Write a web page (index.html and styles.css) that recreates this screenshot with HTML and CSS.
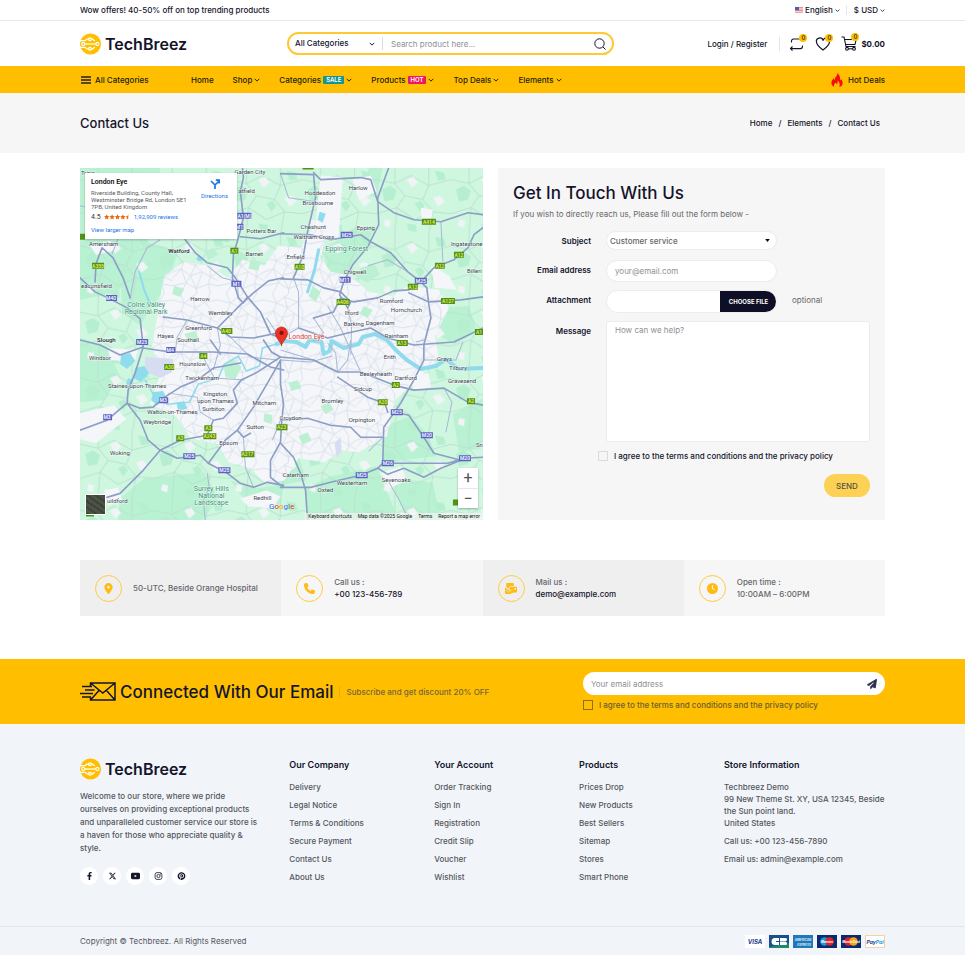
FILE: index.html
```html
<!DOCTYPE html>
<html lang="en">
<head>
<meta charset="utf-8">
<meta name="viewport" content="width=device-width, initial-scale=1">
<title>Contact Us - TechBreez</title>
<link rel="stylesheet" href="styles.css">
</head>
<body>
<svg class="defs" aria-hidden="true">
  <symbol id="chev" viewBox="0 0 8 8"><path d="M1 2.5 4 5.5 7 2.5" fill="none" stroke="currentColor" stroke-width="1.3"/></symbol>
  <symbol id="logo" viewBox="0 0 22 22">
    <circle cx="11" cy="11" r="11" fill="#ffbf00"/>
    <g fill="none" stroke="#fff" stroke-width="1.3">
      <circle cx="3.4" cy="11" r="1.6"/><circle cx="18.2" cy="11" r="1.6"/><path d="M5 11h11.6"/>
      <circle cx="10.4" cy="6" r="1.5"/><path d="M0 7.500h5.500L7 6h2"/>
      <circle cx="10.400" cy="16" r="1.500"/><path d="M0 14.500h5.500L7 16h2"/>
      <path d="M11.900 6h1.600l2 2M11.900 16h1.600l2-2"/>
    </g>
  </symbol>
</svg>

<div class="topbar">
  <div class="wrap topbar-row">
    <span>Wow offers! 40-50% off on top trending products</span>
    <div class="prefs">
      <button type="button" class="pref">
        <svg class="flag" viewBox="0 0 8 6"><path fill="#fff" d="M0 0h8v6H0z"/><path stroke="#e0606a" stroke-width=".8" d="M0 .4h8M0 2h8M0 3.600h8M0 5.200h8"/><path fill="#4a62a8" d="M0 0h4v3.200H0z"/></svg>
        English <svg class="chev"><use href="#chev"/></svg>
      </button>
      <button type="button" class="pref">$ USD <svg class="chev"><use href="#chev"/></svg></button>
    </div>
  </div>
</div>

<header class="wrap header">
  <a href="#" class="logo"><svg><use href="#logo"/></svg>TechBreez</a>
  <form class="search">
    <button type="button" class="search-cat">All Categories <svg class="chev"><use href="#chev"/></svg></button>
    <input type="search" aria-label="Search product" placeholder="Search product here...">
    <button type="button" class="icon-btn" aria-label="Search"><svg viewBox="0 0 12 12" width="12" height="12" fill="none" stroke="#14142b"><circle cx="5.500" cy="5.500" r="4.700"/><path d="m9 9 2.500 2.500"/></svg></button>
  </form>
  <div class="account">
    <a href="#" class="login">Login / Register</a>
    <a href="#" class="tool" aria-label="Compare"><svg viewBox="0 0 16 14" width="16" height="14" fill="none" stroke="#14142b" stroke-width="1.100"><path d="M2.500 5.500V4a2 2 0 0 1 2-2H14M13.500 8.500V9.600a2 2 0 0 1-2 2H1.500M3.500 9.500l-2 2.100 2 2"/></svg><span class="count">0</span></a>
    <a href="#" class="tool" aria-label="Wishlist"><svg viewBox="0 0 16 14" width="16" height="14" fill="none" stroke="#14142b" stroke-width="1.200"><path d="M8 13C4 10 1.500 7.600 1.500 5A3.300 3.300 0 0 1 8 3.600 3.300 3.300 0 0 1 14.500 5C14.500 7.600 12 10 8 13z"/></svg><span class="count">0</span></a>
    <a href="#" class="tool cart"><svg viewBox="0 0 17 15" width="17" height="15" fill="none" stroke="#14142b" stroke-width="1.100"><path d="M.5 1H3l2 9.500h9.500M3.600 3.500h11.500L14 8.500H4.700"/><circle cx="6" cy="12.800" r="1.400"/><circle cx="13" cy="12.800" r="1.400"/><path d="M7.400 12.800h4.200"/></svg><span class="count">0</span><b>$0.00</b></a>
  </div>
</header>

<nav class="nav">
  <div class="wrap nav-row">
    <button type="button" class="all-cats"><svg viewBox="0 0 10 8" width="10" height="8" stroke="#222" stroke-width="1.400"><path d="M0 1h10M0 4h10M0 7h10"/></svg>All Categories</button>
    <a href="#">Home</a>
    <a href="#">Shop <svg class="chev"><use href="#chev"/></svg></a>
    <a href="#">Categories <span class="tag sale">SALE</span><svg class="chev"><use href="#chev"/></svg></a>
    <a href="#">Products <span class="tag hot">HOT</span><svg class="chev"><use href="#chev"/></svg></a>
    <a href="#">Top Deals <svg class="chev"><use href="#chev"/></svg></a>
    <a href="#">Elements <svg class="chev"><use href="#chev"/></svg></a>
    <a href="#" class="deals"><svg viewBox="0 0 12 14" width="12" height="14"><path fill="#f80d0d" d="M6.200 0c.6 2.200-.9 3.200-1.800 4.500-.6.900-.5 1.700-.3 2.500C3.200 6.600 3 6 3 5 1.400 6.700.2 8.300.4 10.300.6 12 1.700 13.400 3.200 14c-.8-2 .2-3.400 1.500-4.600.3 1 .8 1.300 1.500 1.500.6-1 .6-2 .2-3.300C8.200 8.700 9.400 11.500 8.300 14c2.200-.6 3.500-2.200 3.400-4.300-.1-1.500-.9-2.500-1.400-3.700-.3.700-.6 1.100-1.200 1.400C9.300 4.600 8.700 1.700 6.200 0z"/></svg>Hot Deals</a>
  </div>
</nav>

<div class="crumbs">
  <div class="wrap crumbs-row">
    <h1>Contact Us</h1>
    <div class="trail"><a href="#">Home</a><span>/</span><a href="#">Elements</a><span>/</span><a href="#">Contact Us</a></div>
  </div>
</div>

<main class="wrap">
  <section class="contact">
    <div class="map">
      <svg class="map-art" viewBox="0 0 402 352" preserveAspectRatio="xMidYMid slice" role="img" aria-label="Map of London">
        <defs>
          <pattern id="streets" width="46" height="42" patternUnits="userSpaceOnUse">
            <path fill="none" stroke="#d5dde8" stroke-width=".8" d="M0 6 12 9 20 3 33 8 46 6M0 20 9 17 18 24 30 20 38 25 46 20M0 34 14 31 24 37 36 32 46 34M8 0 12 9 9 17 14 31 8 42M24 0 20 3 23 14 18 24 24 37 24 42M38 0 33 8 38 16 38 25 36 32 38 42M12 9 23 14 33 8M23 14 30 20 24 37M9 17 0 27M38 25 46 29M14 31 18 24"/>
          </pattern>
          <pattern id="lanes" width="74" height="66" patternUnits="userSpaceOnUse">
            <path fill="none" stroke="#b9e3cf" d="M0 12 18 16 34 8 52 18 74 12M0 46 20 40 38 52 56 44 74 46M18 0 18 16 28 28 20 40 18 66M52 0 52 18 46 32 56 44 52 66M28 28 46 32"/>
            <path fill="#b5efd0" d="m5 22 8-4 7 5-3 9-9 2zM38 36l6-3 4 5-5 6zM58 3l9 2 2 7-8 1zM30 56l9 1 1 7-8-1z"/>
            <path fill="#f1f4f6" d="m30 12 7-3 4 6-6 5zM56 30l7-2 5 6-7 5zM8 52l6 1-1 7-6-2z"/>
          </pattern>
        </defs>
        <path fill="#cff7e0" d="M0 0h402v352H0z"/>
        <g fill="#b9f1d3">
          <path d="M0 0h80v20l-14 30-8 40-20 34-38 8zM40 95l28-20 30 8-10 32-28 42-18-12z"/>
          <path d="M243 85l30-25 22-2-10 20-22 30-14 8zM288 0h14l-6 30-12-4zM350 140l38-2 8 26-22 12-24-12z"/>
          <path d="M303 258l26-10 18 18 8 22-34 4-18 6zM250 308l46-10 8 20 14 34h-90l-3-32zM372 246l30-16v50l-24 4z"/>
          <path d="M40 330l24-20 60-6 14 26-16 22H38zM0 170l26 8 14 30-16 24-24 2zM150 312l26 8 26-4-2 20-34-2zM310 310l42 4 8 38h-34z"/>
          <path d="M190 290l28-2 8 24-30 6zM140 52l16 5-8 18-18-4z"/>
        </g>
        <path fill="url(#lanes)" d="M0 0h402v352H0z"/>
        <path fill="#f4f6f9" d="M84 108l20-14 24 4 20 12 14-18 22 6 14-20 22 2 14-22 12 6-6 26 10 14 20 4 18 16 22 4 18-10 30 4 10 18-14 28 4 22-18 18-26 24-8 36-28 16-16-2-18 12-26-4-14 22-18 4-16-16-22-6-10-18-28-6-14-22-26-12 10-30-8-28z"/>
        <path fill="#f4f6f9" d="M240 8l22 2-4 60-24-4zM272 12l18-4 6 16-18 8zM10 78l20-5 4 10-18 4zM28 180l30 2-4 12-24-2zM24 322l14-3 4 12-14 6zM340 40l12 2-2 12-9 2zM350 98l18 10 8 14-22-2zM300 305l20-7 6 14-17 8zM160 330l26-8 14 6-8 12-24-2zM0 245l34-8 12 14-30 24-16-4zM330 210l18-5 2 14-17 4z"/>
        <path fill="url(#streets)" d="M84 108l20-14 24 4 20 12 14-18 22 6 14-20 22 2 14-22 12 6-6 26 10 14 20 4 18 16 22 4 18-10 30 4 10 18-14 28 4 22-18 18-26 24-8 36-28 16-16-2-18 12-26-4-14 22-18 4-16-16-22-6-10-18-28-6-14-22-26-12 10-30-8-28z"/>
        <g fill="#bdf0d2">
          <path d="M143 196l10-5 8 8-6 12-10-2zM124 84l9-4 5 7-10 5zM94 118l10 3-4 8-8-3zM170 92l10 2-2 9-10-2zM232 118l8 6-5 10-7-6zM280 100l14-4 5 11-13 8-9-5zM208 215l9-3 4 8-10 3zM240 238l8-4 5 7-8 5zM104 166l11-3 3 7-9 4zM283 138l9 4-5 8-8-4zM184 245l8 2-1 9-8-3zM218 268l9-4 4 8-9 4z"/>
        </g>
        <path fill="#d6dcf2" d="M65 189l28 2-1 13-12 6-15-7zM254 275l6-6 1 14-5 6z"/>
        <g fill="#8fdcec">
          <path d="M41 187l9-2 5 8-8 8-7-5zM55 200l9-2 5 7-8 9-8-4zM73 224l10-1 3 7-9 7-6-5zM96 234l8-1 3 7-9 3zM48 210l5 2-2 7-5-3zM118 87l5 3-3 4-4-2zM239 44l6 2-3 9-5-3z"/>
        </g>
        <g fill="none" stroke="#90daed" stroke-linejoin="round" stroke-linecap="round">
          <path stroke-width="3" d="M238 82l-4 20-7 22"/>
          <path stroke-width="2" d="M59 104l5 18 5 12"/>
          <path stroke-width="4" d="M196 176l8-3 12 1 9 5 4-7 12 2 2 12 6-3 2-10 12 7 15-4 4-7 12-3 12 6 9 10 11 10 14 9 15-3 10-7 12 10 25-1"/>
          <path stroke-width="1.500" d="M196 176l-14 4-3 18-13 5-8-15-14 8-6 14-20 6-9 18-22 2-14-10-8-14"/>
        </g>
        <g fill="none" stroke="#a8b8d6" stroke-linejoin="round">
          <path d="M50 130l5-26 12-24 13-8M158 130l-1-16-15-4-15-12M107 152l-10 17-2 15M137 160l3 17-7 25M180 144l10 20M213 110l5 14v36M267 140l4 17-1 30M253 144l-20 6 10 15-10 8M200 182l33 10 24 12M200 192l30 2 22-6M270 172l-3 20-10 12M247 175l8 10 2 19M88 225l29 4 3 15 13 8M163 269l2 30 8 20M127 305l2 15-6 12 2 20M307 312l10 17 10 20M218 160l-18 10-14-20M280 204l-20-44-13-22M150 169l20 20 27 3M120 184l14 26 30 2M360 54l2 40M327 104l-20-12-20 6M343 192l32 0 7-18M343 172l-8 2M363 220l8 14-6 30M200 252l-8 20M302 269l-14 14M0 38l30 7 40-10M32 86l8-20 42-6M200 6l8 24 27 4"/>
        </g>
        <g fill="none" stroke="#8c9dc6" stroke-width="1.600" stroke-linejoin="round" stroke-linecap="round">
          <path d="M0 110l15 14 15 7 17 9 13 11 3 28M15 114l1-18 6-16 11 10 10 20 7 20"/>
          <path d="M105 72l10 13 12 10 20 5 8 10 12 19-4 6-5-5M162 0l1 10-3 14 3 26-5 20-5 17-1 23 6 20M160 69l20 2 23-6"/>
          <path d="M203 110l-15 3-15 12-13 12-23 23-30-8-24-3M137 160l13 9 23 1 24-5M167 129l13 15 10 22 10 4"/>
          <path d="M200 6l33 1 2 23-8 34-4 23-10 23M200 66l30 1 20 5 30-5 10 7 20 11 17 19 13 10 6 6 2 17 2 13-7 27v15l-10 20-13 23-17 24-1 36-5 5-17 7-30 7-20 5h-30"/>
          <path d="M308 0l-11 30 1 27-11 22-15 18-9 17-4 13 8 13M233 5l7 7 40-2 10 2 7 22 16 11 20 7 27 2 27-9 15 2"/>
          <path d="M260 130l13 4 24-4 16-7 15-1 12-8 13-14 20-8 14-12 6-13 9-7M328 125l20 9 32-2 22-3M200 111l27 1 16 8 17 4 10 10-3 6M260 130l-7 14-20 6"/>
          <path d="M218 160l29 10 20-5 23-5 17 10 26 7 40-3 29-14"/>
          <path d="M0 262l27-10 20-17 13 5 13-1 10-9 17-11 17-7 16-12 27-5M63 179l-8 26-7 17-1 13 13 17 8 20 12 10 17 8 23-3 8 8 19 10 13 10 13 4 14-5 16 3M63 179l-23 8-20-10-20-5M63 180l27 4h43l34 2 23 13 13 3"/>
          <path d="M27 329l13-4 23-23 17-20 20-10 27-5 6-15 10-2 14-15-4-13 8-10 16-8 23-15M128 295l17-23 12-10 16-23 14-24 13-23M157 262l6 7 7-4M200 192v24l3 20-2 20-1 18-10 18v17l13 10"/>
          <path d="M302 295h65l16-5 19-1M315 244l13 3 15 22 10 16 27 7M297 300l10 6 16-6 20 9 17-9 20-8"/>
          <path d="M200 189l33 3 24 12h23l33 13 20 5 30-2 24 14 15 3M257 209l30 20 17 6 3 9M200 252l27-2 23 7 20 2 10 10h22M200 275l13 14 7 16 5 17 2 30M130 172l10 14M183 172l8 12 9 5"/>
        </g>
        <g class="places">
          <text x="1" y="7">Tring</text><text x="154" y="6">Garden City</text><text x="158" y="25">atfield</text>
          <text x="224" y="27">Hoddesdon</text><text x="268" y="22">Harlow</text><text x="222" y="37">Broxbourne</text>
          <text x="220" y="61">Cheshunt</text><text x="276" y="62">Epping</text><text x="213" y="71">Waltham Cross</text>
          <text x="206" y="91">Enfield</text><text x="166" y="65">Potters Bar</text><text x="165" y="88">Barnet</text>
          <text x="9" y="78">Amersham</text><text x="88" y="85" class="town">Watford</text><text x="1" y="120">eaconsfield</text>
          <text x="110" y="133">Harrow</text><text x="128" y="147">Wembley</text><text x="105" y="162">Greenford</text>
          <text x="77" y="170">Hayes</text><text x="97" y="174">Southall</text><text x="17" y="174" class="town">Slough</text>
          <text x="263" y="106">Chigwell</text><text x="299" y="135">Romford</text><text x="310" y="144">Hornchurch</text>
          <text x="264" y="147">Ilford</text><text x="263" y="158">Barking</text><text x="285" y="157">Dagenham</text>
          <text x="304" y="170">Rainham</text><text x="370" y="78">Ingatestone</text><text x="386" y="105">Billeri</text>
          <text x="9" y="192">Windsor</text><text x="99" y="198">Hounslow</text><text x="105" y="212">Twickenham</text>
          <text x="28" y="220">Staines-upon-Thames</text><text x="123" y="228">Kingston</text><text x="117" y="235">upon Thames</text>
          <text x="122" y="243">Surbiton</text><text x="67" y="246">Walton-on-Thames</text><text x="63" y="256">Weybridge</text>
          <text x="172" y="237">Mitcham</text><text x="166" y="261">Sutton</text><text x="199" y="252">Croydon</text>
          <text x="139" y="277">Epsom</text><text x="30" y="287">Woking</text><text x="27" y="335">uildford</text>
          <text x="173" y="332">Redhill</text><text x="303" y="191">Erith</text><text x="356" y="193">Grays</text>
          <text x="368" y="202">Tilbury</text><text x="279" y="208">Bexleyheath</text><text x="314" y="212">Dartford</text>
          <text x="367" y="215">Gravesend</text><text x="273" y="223">Sidcup</text><text x="241" y="235">Bromley</text>
          <text x="268" y="254">Orpington</text><text x="202" y="309">Caterham</text><text x="256" y="317">Westerham</text>
          <text x="237" y="324">Oxted</text><text x="301" y="314">Sevenoaks</text><text x="395" y="279">Sn</text>
        </g>
        <g class="parks">
          <text x="66" y="139">Colne Valley</text><text x="66" y="146">Regional Park</text><text x="266" y="83">Epping Forest</text>
          <text x="131" y="323">Surrey Hills</text><text x="131" y="330">National</text><text x="131" y="337">Landscape</text>
        </g>
        <g class="roads-m">
          <path d="M157 45h14v6h-14zM155 56h8v6h-8zM26 127h11v6H26zM151 113h10v6h-10zM56 171h12v6H56zM260 64h12v6h-12zM259 109h11v6h-11zM334 110h12v6h-12zM86 179h9v6h-9zM79 229h9v6h-9zM23 246h9v6h-9zM103 285h12v6h-12zM138 299h12v6h-12zM310 241h12v6h-12zM340 264h12v6h-12zM301 292h12v6h-12zM275 304h12v6h-12zM378 287h12v6h-12z"/>
          <text x="164" y="50">A1(M)</text><text x="159" y="61">M1</text><text x="31" y="132">M40</text><text x="156" y="118">M1</text><text x="62" y="176">M25</text><text x="266" y="69">M25</text><text x="264" y="114">M11</text><text x="340" y="115">M25</text><text x="90" y="184">M4</text><text x="83" y="234">M3</text><text x="27" y="251">M3</text><text x="109" y="290">M25</text><text x="144" y="304">M25</text><text x="316" y="246">M25</text><text x="346" y="269">M20</text><text x="307" y="297">M26</text><text x="281" y="309">M25</text><text x="384" y="292">M20</text>
        </g>
        <g class="roads-a">
          <path d="M12 95h12v6H12zM150 80h8v6h-8zM0 66h5v6H0zM141 160h11v6h-11zM222-3h11v5h-11zM341 51h14v6h-14zM373 84h10v6h-10zM354 95h10v6h-10zM327 116h10v6h-10zM360 130h14v6h-14zM214 96h10v6h-10zM256 131h13v6h-13zM394 161h8v6h-8zM316 172h11v6h-11zM119 185h8v6h-8zM84 196h10v6H84zM124 257h8v6h-8zM123 265h13v6h-13zM96 267h8v6h-8zM161 283h13v6h-13zM196 256h11v6h-11zM311 214h8v6h-8zM297 231h10v6h-10zM386 230h8v6h-8zM372 331h8v6h-8zM6 344h8v4H6z"/>
          <text x="18" y="100">A355</text><text x="154" y="85">A1</text><text x="146" y="165">A40</text><text x="348" y="56">A414</text><text x="378" y="89">A12</text><text x="359" y="100">A12</text><text x="332" y="121">A12</text><text x="367" y="135">A127</text><text x="219" y="101">A10</text><text x="262" y="136">A406</text><text x="398" y="166">A1</text><text x="321" y="177">A13</text><text x="123" y="190">A4</text><text x="89" y="201">A30</text><text x="128" y="262">A3</text><text x="129" y="270">A243</text><text x="100" y="272">A3</text><text x="167" y="288">A217</text><text x="201" y="261">A23</text><text x="315" y="219">A2</text><text x="302" y="236">A20</text><text x="390" y="235">A2</text>
        </g>
        <path fill="#ea3323" stroke="#b91d14" stroke-width=".6" d="M201 178c-.6-5-6-7-6-13a6 6 0 0 1 12 0c0 6-5.400 8-6 13z"/><circle cx="201" cy="165" r="2.100" fill="#7d130d"/>
        <text class="pin-label" x="208" y="171">London Eye</text>
      </svg>
      <div class="place-card">
        <div>
          <strong>London Eye</strong>
          <p>Riverside Building, County Hall,<br>Westminster Bridge Rd, London SE1<br>7PB, United Kingdom</p>
          <div class="rating">4.5 <svg viewBox="0 0 50 10" width="27" height="6" fill="#ea6a0b"><path id="st" d="m5 0 1.500 3.300 3.500.4-2.600 2.400.7 3.600L5 7.900 1.900 9.700l.7-3.600L0 3.700l3.500-.4z"/><use href="#st" x="10"/><use href="#st" x="20"/><use href="#st" x="30"/><path d="M45 0v7.900l-3.100 1.800.7-3.600L40 3.700l3.500-.4z"/></svg> <a href="#">1,92,909 reviews</a></div>
          <a href="#">View larger map</a>
        </div>
        <a href="#" class="directions"><svg viewBox="0 0 10 10" width="10" height="10" fill="none" stroke="#1a73e8" stroke-width="1.700"><path d="M5 10V6L1 2M5 6l3.500-3.500M5.800 1.200h3.400v3.400"/></svg>Directions</a>
      </div>
      <button type="button" class="satellite" aria-label="Show satellite imagery"></button>
      <div class="zoom"><button type="button" aria-label="Zoom in">+</button><button type="button" aria-label="Zoom out">−</button></div>
      <div class="google"><span class="b">G</span><span class="r">o</span><span class="y">o</span><span class="b">g</span><span class="g">l</span><span class="r">e</span></div>
      <div class="map-legal"><span>Keyboard shortcuts</span><span>Map data ©2025 Google</span><span>Terms</span><span>Report a map error</span></div>
    </div>

    <form class="card">
      <h2>Get In Touch With Us</h2>
      <p class="lead">If you wish to directly reach us, Please fill out the form below -</p>
      <div class="fields">
        <label for="subject">Subject</label>
        <div class="select"><select id="subject"><option>Customer service</option><option>Webmaster</option></select><svg viewBox="0 0 6 4" width="5" height="3"><path d="M0 0h6L3 4z"/></svg></div>
        <label for="email">Email address</label>
        <input class="pill" id="email" type="email" placeholder="your@email.com">
        <label for="file">Attachment</label>
        <div class="file"><span class="file-name"></span><span class="file-btn">CHOOSE FILE</span><input id="file" type="file"></div>
        <span class="optional">optional</span>
        <label for="message">Message</label>
        <textarea id="message" placeholder="How can we help?"></textarea>
      </div>
      <label class="agree"><input type="checkbox">I agree to the terms and conditions and the privacy policy</label>
      <button type="button" class="send">SEND</button>
    </form>
  </section>

  <section class="info">
    <div><i><svg viewBox="0 0 384 512"><path d="M215.700 499.200C267 435 384 279.400 384 192 384 86 298 0 192 0S0 86 0 192c0 87.400 117 243 168.300 307.200 12.300 15.300 35.100 15.300 47.400 0zM192 128a64 64 0 1 1 0 128 64 64 0 1 1 0-128z"/></svg></i><p>50-UTC, Beside Orange Hospital</p></div>
    <div><i><svg viewBox="0 0 512 512"><path d="M164.900 24.600c-7.700-18.600-28-28.500-47.400-23.200l-88 24C12.100 30.200 0 46 0 64c0 247.400 200.600 448 448 448 18 0 33.800-12.100 38.600-29.500l24-88c5.300-19.400-4.600-39.700-23.200-47.400l-96-40c-16.300-6.800-35.200-2.100-46.300 11.600L304.700 368C234.300 334.700 177.300 277.700 144 207.300L193.300 167c13.700-11.200 18.400-30 11.600-46.300l-40-96z"/></svg></i><p>Call us :<br><b>+00 123-456-789</b></p></div>
    <div><i><svg viewBox="0 0 24 22" class="wide"><path d="M4 0h12a1.500 1.500 0 0 1 1.500 1.500V6H11a3 3 0 0 0-3 3v3L2.500 8V1.500A1.500 1.500 0 0 1 4 0zM0 9l8 5.500 3 .5v7H1.500A1.500 1.500 0 0 1 0 20.500z"/><path fill-rule="evenodd" d="M11 7.500h11.500A1.500 1.500 0 0 1 24 9v8.500a1.500 1.500 0 0 1-1.500 1.500H17l-7 3v-4L9.500 17V9A1.500 1.500 0 0 1 11 7.500zm8 2.500v3.500h3V10z"/><path stroke="#efefef" stroke-width="1.300" fill="none" d="m2 14 5 4 8-5"/></svg></i><p>Mail us :<br><b>demo@example.com</b></p></div>
    <div><i><svg viewBox="0 0 20 20"><circle cx="10" cy="10" r="10"/><path d="M10 4v6l4 2.500" fill="none" stroke="#f6f6f6" stroke-width="2"/></svg></i><p>Open time :<br>10:00AM – 6:00PM</p></div>
  </section>
</main>

<section class="news">
  <div class="wrap news-row">
    <svg class="mail" viewBox="0 0 36 19" width="36" height="19" fill="none" stroke="#14142b" stroke-width="1.500"><path d="M10.500 4.500V1H35v17H10.500v-3M10.500 1l12.300 10L35 1M10.500 18l8.500-9.500M35 18l-8.500-9.500M2 4.500h10M5 8h9.500M0 11.500h13M2 15h9"/></svg>
    <h2>Connected With Our Email</h2>
    <span class="news-sub">Subscribe and get discount 20% OFF</span>
    <form class="news-form">
      <div class="news-field">
        <input type="email" aria-label="Your email address" placeholder="Your email address">
        <button type="button" class="icon-btn" aria-label="Subscribe"><svg viewBox="0 0 512 512" width="10" height="10" fill="#33334d"><path d="M498 6c11 8 16 20 14 32l-64 416c-3 20-24 32-43 24l-119-50-68 74c-9 9-22 12-34 8s-20-16-20-30v-83c0-4 2-8 4-11l168-183c12-14-5-32-19-20L106 360 17 316C-4 305-6 275 16 263L464 5c11-6 24-6 34 1z"/></svg></button>
      </div>
      <label class="agree"><input type="checkbox">I agree to the terms and conditions and the privacy policy</label>
    </form>
  </div>
</section>

<footer class="footer">
  <div class="wrap cols">
    <div class="about">
      <a href="#" class="logo"><svg><use href="#logo"/></svg>TechBreez</a>
      <p>Welcome to our store, where we pride<br>ourselves on providing exceptional products<br>and unparalleled customer service our store is<br>a haven for those who appreciate quality &amp;<br>style.</p>
      <div class="social">
        <a href="#" aria-label="Facebook"><svg viewBox="0 0 320 512"><path d="m279.140 288 14.220-92.660h-88.910v-60.130c0-25.350 12.420-50.060 52.240-50.060h40.420V6.260S260.430 0 225.360 0c-73.220 0-121.080 44.380-121.080 124.720v70.620H22.890V288h81.390v224h100.170V288z"/></svg></a>
        <a href="#" aria-label="X"><svg viewBox="0 0 512 512"><path d="M389.200 48h70.600L305.600 224.200 487 464H345L233.700 318.600 106.500 464H35.800L200.700 275.500 26.800 48H172.400L272.900 180.900 389.200 48zM364.400 421.800h39.100L151.100 88h-42L364.400 421.800z"/></svg></a>
        <a href="#" aria-label="YouTube"><svg viewBox="0 0 20 16"><path fill-rule="evenodd" d="M3 1h14a3 3 0 0 1 3 3v8a3 3 0 0 1-3 3H3a3 3 0 0 1-3-3V4a3 3 0 0 1 3-3zm5 4v6l5-3z"/></svg></a>
        <a href="#" aria-label="Instagram"><svg viewBox="0 0 20 20" class="line"><rect x="1.500" y="1.500" width="17" height="17" rx="5"/><circle cx="10" cy="10" r="4"/><circle cx="15" cy="5" r=".6"/></svg></a>
        <a href="#" aria-label="Pinterest"><svg viewBox="0 0 496 512"><path d="M496 256c0 137-111 248-248 248-25.600 0-50.200-3.900-73.400-11.100 10.100-16.500 25.200-43.500 30.800-65 3-11.600 15.400-59 15.400-59 8.100 15.400 31.700 28.500 56.800 28.500 74.800 0 128.700-68.800 128.700-154.300 0-81.900-66.900-143.200-152.900-143.200-107 0-163.900 71.800-163.900 150.100 0 36.400 19.400 81.700 50.300 96.100 4.700 2.200 7.200 1.200 8.300-3.300.8-3.400 5-20.300 6.900-28.100.6-2.500.3-4.700-1.700-7.100-10.100-12.500-18.300-35.300-18.300-56.600 0-54.700 41.400-107.600 112-107.600 60.900 0 103.600 41.500 103.600 100.900 0 67.100-33.900 113.600-78 113.600-24.300 0-42.600-20.100-36.700-44.800 7-29.500 20.500-61.300 20.500-82.600 0-19-10.200-34.900-31.400-34.900-24.900 0-44.900 25.700-44.900 60.200 0 22 7.400 36.800 7.400 36.800s-24.500 103.800-29 123.200c-5 21.400-3 51.600-.9 71.200C65.400 450.900 0 361.100 0 256 0 119 111 8 248 8s248 111 248 248z"/></svg></a>
      </div>
    </div>
    <div><h3>Our Company</h3><ul><li><a href="#">Delivery</a></li><li><a href="#">Legal Notice</a></li><li><a href="#">Terms &amp; Conditions</a></li><li><a href="#">Secure Payment</a></li><li><a href="#">Contact Us</a></li><li><a href="#">About Us</a></li></ul></div>
    <div><h3>Your Account</h3><ul><li><a href="#">Order Tracking</a></li><li><a href="#">Sign In</a></li><li><a href="#">Registration</a></li><li><a href="#">Credit Slip</a></li><li><a href="#">Voucher</a></li><li><a href="#">Wishlist</a></li></ul></div>
    <div><h3>Products</h3><ul><li><a href="#">Prices Drop</a></li><li><a href="#">New Products</a></li><li><a href="#">Best Sellers</a></li><li><a href="#">Sitemap</a></li><li><a href="#">Stores</a></li><li><a href="#">Smart Phone</a></li></ul></div>
    <div class="store"><h3>Store Information</h3><p>Techbreez Demo<br>99 New Theme St. XY, USA 12345, Beside<br>the Sun point land.<br>United States</p><p>Call us: +00 123-456-7890</p><p>Email us: admin@example.com</p></div>
  </div>
  <div class="bottom">
    <div class="wrap bottom-row">
      <span>Copyright © Techbreez. All Rights Reserved</span>
      <div class="pay">
        <svg viewBox="0 0 20 13"><path fill="#fff" d="M0 0h20v13H0z"/><text x="10" y="9" fill="#1a3c8c" class="visa">VISA</text></svg>
        <svg viewBox="0 0 20 13"><path fill="#1a5a9a" d="M0 0h20v6H0z"/><path fill="#1f8a6a" d="M0 6h20v7H0z"/><path fill="#1c4f8f" d="M0 0h20v8L0 12z"/><path fill="#fff" d="M6 3h4v3H7v1h3v3H6a3.500 3.500 0 0 1 0-7zM11 3h5.500a1.600 1.600 0 0 1 0 3.200H11zM11 6.800h5.500a1.600 1.600 0 0 1 0 3.200H11z"/></svg>
        <svg viewBox="0 0 20 13"><path fill="#1f78b8" d="M0 0h20v13H0z"/><text x="10" y="6" fill="#d5ecfa" class="amex">AMERICAN</text><text x="11" y="11" fill="#d5ecfa" class="amex">EXPRESS</text></svg>
        <svg viewBox="0 0 20 13"><path fill="#0c2a6e" d="M0 0h20v13H0z"/><circle cx="7.500" cy="6.500" r="4.300" fill="#1a9be0"/><circle cx="12.500" cy="6.500" r="4.300" fill="#e01f2d"/><text x="10" y="8" fill="#fff" class="amex">Maestro</text></svg>
        <svg viewBox="0 0 20 13"><path fill="#0c2a6e" d="M0 0h20v13H0z"/><circle cx="7.500" cy="6.500" r="4.300" fill="#e01f2d"/><circle cx="12.500" cy="6.500" r="4.300" fill="#f7a21b"/><text x="10" y="8" fill="#fff" class="amex">MasterCard</text></svg>
        <svg viewBox="0 0 20 13"><path fill="#fff" stroke="#f4d2a4" d="M.5.5h19v12H.5z"/><text x="10" y="8.500" fill="#1a3c8c" class="paypal">Pay<tspan fill="#1d9ad6">Pal</tspan></text></svg>
      </div>
    </div>
  </div>
</footer>
</body>
</html>
```
FILE: styles.css
```css
* { box-sizing: border-box; }
body {
  margin: 0;
  font: 500 8px/12px Inter, "Open Sans", sans-serif;
  color: #14142b;
  background: #fff;
}
a { color: inherit; text-decoration: none; }
h1, h2, h3, p, ul { margin: 0; padding: 0; font-weight: 500; }
ul { list-style: none; }
button, input, select, textarea { font: inherit; color: inherit; border: 0; padding: 0; margin: 0; background: none; outline: 0; }
button { cursor: pointer; }
::placeholder { color: #8f8f94; opacity: 1; font-weight: 400; }
.defs { position: absolute; width: 0; height: 0; }
.wrap { width: calc(100% - 32px); max-width: 805px; margin: 0 auto; }
.chev { width: 6px; height: 6px; }

.topbar { border-bottom: 1px solid #e8e8ea; }
.topbar-row { display: flex; justify-content: space-between; align-items: center; height: 20px; }
.prefs { display: flex; align-items: center; }
.pref { display: flex; align-items: center; gap: 2px; line-height: 10px; }
.pref + .pref { border-left: 1px solid #e8e8ea; margin-left: 6px; padding-left: 7px; }
.pref .chev { width: 5px; height: 5px; }
.flag { width: 8px; height: 6px; }

.header { display: flex; align-items: center; height: 45px; }
.logo { display: flex; align-items: center; gap: 4px; font-size: 16px; line-height: 22px; font-weight: 600; color: #14142b; }
.logo svg { width: 21px; height: 22px; }
.header .logo { flex: 0 0 207px; }
.search { flex: 0 1 327px; display: flex; align-items: center; height: 23px; border: 2px solid #ffc933; border-radius: 12px; padding: 0 6px 0 6px; }
.search-cat { display: flex; align-items: center; justify-content: space-between; width: 88px; padding-right: 7px; border-right: 1px solid #dedee2; line-height: 13px; }
.search input { flex: 1; min-width: 0; padding-left: 8px; }
.icon-btn { display: flex; }
.account { margin-left: auto; display: flex; align-items: center; }
.login { padding-right: 12px; border-right: 1px solid #e4e4e6; margin-right: 9px; line-height: 14px; }
.tool { position: relative; display: flex; align-items: center; margin-right: 10px; }
.tool.cart { margin-right: 0; gap: 3px; }
.count { position: absolute; left: 10px; top: -3px; width: 8px; height: 8px; border-radius: 4px; background: #ffc000; font-size: 6px; line-height: 8px; text-align: center; }

.nav { background: #ffbf00; }
.nav-row { display: flex; align-items: center; gap: 19px; height: 27px; color: #221d10; }
.nav-row a, .all-cats { display: flex; align-items: center; gap: 2px; white-space: nowrap; }
.all-cats { flex: 0 0 92px; gap: 4px; padding-left: 1px; }
.deals.deals { margin-left: auto; gap: 5px; }
.tag { padding: 0 3px; border-radius: 1px; color: #fff; font-size: 6px; line-height: 8px; font-weight: 600; }
.sale { background: #149590; }
.hot { background: #ec1763; }

.crumbs { background: #f6f6f6; }
.crumbs-row { display: flex; align-items: center; justify-content: space-between; height: 60px; }
h1 { font-size: 13px; line-height: 18px; }
.trail { display: flex; gap: 6px; padding-right: 5px; }

.contact { display: grid; grid-template-columns: 403fr 387fr; gap: 15px; padding-top: 15px; }
.map { position: relative; overflow: hidden; min-height: 352px; font-family: Roboto, sans-serif; font-weight: 400; }
.map-art { position: absolute; inset: 0; width: 100%; height: 100%; }
.map-art text { font-size: 6px; fill: #3c4250; }
.places text, .parks text, .pin-label { stroke: #fff; stroke-width: 1px; stroke-opacity: .7; paint-order: stroke; }
.map-art .town { font-weight: 500; fill: #22262e; }
.map-art .parks text { font-size: 7px; fill: #3c9077; text-anchor: middle; }
.roads-m, .roads-a { text-anchor: middle; }
.roads-m path { fill: #5b62c4; }
.roads-a path { fill: #4f9316; }
.map-art .roads-m text { font-size: 5px; font-weight: 500; fill: #fff; }
.map-art .roads-a text { font-size: 5px; font-weight: 500; fill: #f6ec62; }
.map-art .pin-label { font-size: 7px; fill: #e23a30; }
.place-card { position: absolute; left: 5px; top: 5px; width: 152px; display: flex; justify-content: space-between; padding: 3px 9px 4px 6px; background: #fff; box-shadow: 0 1px 2px rgba(0, 0, 0, .25); font-size: 6px; line-height: 7px; color: #5a5a60; white-space: nowrap; }
.place-card p { font-weight: 400; }
.place-card strong { display: block; font-size: 7px; line-height: 13px; font-weight: 600; color: #111; }
.place-card a { color: #1a73e8; }
.rating { display: flex; align-items: center; gap: 3px; font-size: 7px; line-height: 14px; color: #333; }
.rating a { font-size: 6px; }
.rating + a { line-height: 11px; }
.directions { display: flex; flex-direction: column; align-items: center; gap: 3px; padding-top: 3px; }
.satellite { position: absolute; left: 5px; bottom: 5px; width: 21px; height: 21px; border: 1px solid #fff; background: repeating-linear-gradient(35deg, #3c4238 0 2px, #4b5246 2px 5px); }
.zoom { position: absolute; right: 5px; bottom: 12px; width: 20px; background: #fff; box-shadow: 0 1px 2px rgba(0, 0, 0, .3); }
.zoom button { display: block; width: 100%; height: 20px; font: 400 16px/20px Roboto, sans-serif; color: #555; }
.zoom button + button { border-top: 1px solid #e6e6e6; }
.google { position: absolute; left: 189px; bottom: 7px; font: 500 8px/12px Roboto, sans-serif; text-shadow: 0 0 1px #fff; }
.b { color: #4285f4; } .r { color: #ea4335; } .y { color: #e9a700; } .g { color: #34a853; }
.map-legal { position: absolute; right: 0; bottom: 0; display: flex; gap: 6px; padding: 0 3px; background: rgba(245, 245, 245, .7); font-size: 5px; line-height: 7px; color: #111; white-space: nowrap; }

.card { display: flex; flex-direction: column; background: #f6f6f6; padding: 14px 15px 23px; }
.card h2 { font-size: 17px; line-height: 22px; }
.lead { margin: 4px 0 11px; color: #66666c; font-weight: 400; }
.fields { display: grid; grid-template-columns: 78px 171px 1fr; column-gap: 15px; row-gap: 8px; grid-template-rows: 21px 22px 23px 121px; }
.fields label { grid-column: 1; text-align: right; line-height: 21px; font-weight: 600; }
.select { position: relative; height: 19px; }
.select select { appearance: none; width: 100%; height: 100%; padding: 0 3px; background: #fff; border: 1px solid #ececee; border-radius: 10px; color: #66666c; }
.select svg { position: absolute; right: 7px; top: 8px; }
.pill { background: #fff; border: 1px solid #ececee; border-radius: 11px; padding: 0 8px; min-width: 0; }
.file { position: relative; display: flex; overflow: hidden; border: 1px solid #ececee; border-radius: 12px; background: #fff; }
.file-name { flex: 1; }
.file-btn { flex: 0 0 57px; margin: -1px; background: #0e0e26; color: #fff; font-size: 6px; line-height: 23px; font-weight: 700; text-align: center; }
.file input { position: absolute; inset: 0; width: 100%; opacity: 0; }
.optional { line-height: 21px; color: #66666c; font-weight: 400; }
.fields textarea { grid-column: 2 / 4; resize: none; background: #fff; border: 1px solid #ececee; border-radius: 2px; padding: 2px 8px; }
.agree { display: flex; align-items: center; gap: 6px; }
.agree input { appearance: none; width: 10px; height: 10px; border: 1px solid #dcdce0; }
.card .agree { margin: 8px 0 0 85px; }
.send { align-self: flex-end; width: 46px; height: 23px; margin-top: 12px; border-radius: 12px; background: #fdd153; color: #55504a; }

.info { display: grid; grid-template-columns: repeat(4, 1fr); margin: 40px 0 43px; }
.info div { display: flex; align-items: center; gap: 11px; min-height: 56px; padding: 0 15px; background: #f6f6f6; color: #66666c; }
.info div:nth-child(odd) { background: #efefef; }
.info i { display: flex; flex: 0 0 27px; height: 27px; align-items: center; justify-content: center; border: 1px solid #ffcb3d; border-radius: 50%; }
.info svg { height: 11px; width: 11px; fill: #ffbb0e; }
.info svg.wide { width: 12px; height: 11px; }
.info b { font-weight: 500; color: #14142b; }

.news { background: #ffbf00; }
.news-row { display: flex; align-items: center; height: 65px; }
.news h2 { font-size: 17px; line-height: 22px; margin-left: 4px; white-space: nowrap; }
.news-sub { margin-left: 6px; padding-left: 6px; border-left: 1px solid #e3ad0e; color: #75643a; white-space: nowrap; }
.news-form { flex: 0 0 302px; margin-left: auto; }
.news-field { display: flex; align-items: center; height: 23px; border-radius: 12px; background: #fff; padding: 0 8px; }
.news-field input { flex: 1; min-width: 0; }
.news .agree { margin-top: 4px; color: #6d5c33; }
.news .agree input { border-color: #8a7024; }

.footer { background: #f1f5fa; color: #55555c; font-weight: 400; }
.cols { display: grid; grid-template-columns: 26fr 18fr 18fr 18fr 20fr; padding: 34px 0 41px; }
.about p { margin: 10px 0 12px; line-height: 13px; white-space: nowrap; }
.social { display: flex; gap: 5px; }
.social a { display: flex; align-items: center; justify-content: center; width: 18px; height: 18px; border-radius: 50%; background: #fff; }
.social svg { width: 9px; height: 8px; fill: #14142b; }
.social svg.line { fill: none; stroke: #14142b; stroke-width: 2px; }
h3 { font-size: 9px; line-height: 14px; margin-bottom: 9px; font-weight: 600; color: #14142b; }
li + li { margin-top: 6px; }
.store p { margin-bottom: 6px; white-space: nowrap; }
.bottom { border-top: 1px solid #e3e6ec; }
.bottom-row { display: flex; align-items: center; justify-content: space-between; height: 28px; }
.pay { display: flex; gap: 4px; }
.pay svg { width: 20px; height: 13px; }
.pay text { text-anchor: middle; font-style: italic; font-weight: 700; }
.visa { font-size: 6px; }
.paypal { font-size: 5px; }
.amex { font-size: 3px; }
```
